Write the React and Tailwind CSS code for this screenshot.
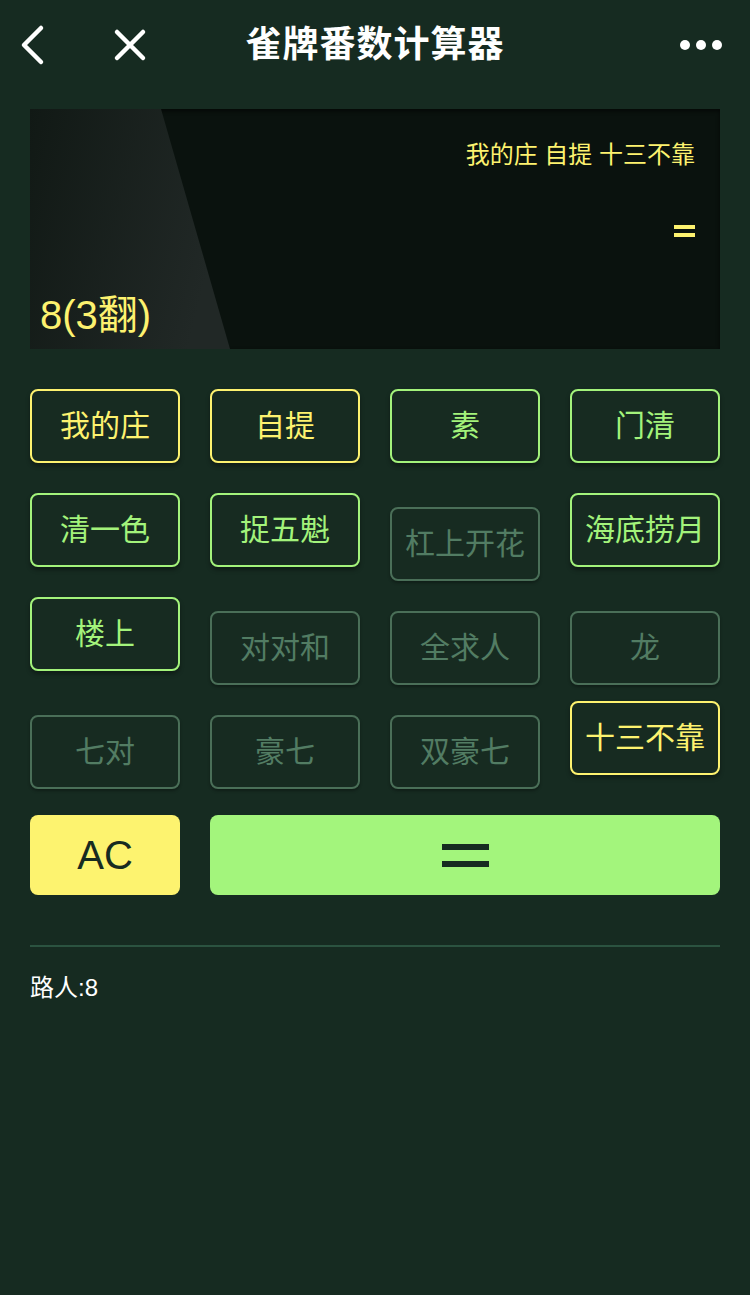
const FONT = { fontFamily: '"Liberation Sans", "Noto Sans CJK SC", sans-serif' }

// kind: yellow = picked (raised), green = available (raised), off = disabled
const TILES = [
  { label: '我的庄', kind: 'yellow' },
  { label: '自提', kind: 'yellow' },
  { label: '素', kind: 'green' },
  { label: '门清', kind: 'green' },
  { label: '清一色', kind: 'green' },
  { label: '捉五魁', kind: 'green' },
  { label: '杠上开花', kind: 'off' },
  { label: '海底捞月', kind: 'green' },
  { label: '楼上', kind: 'green' },
  { label: '对对和', kind: 'off' },
  { label: '全求人', kind: 'off' },
  { label: '龙', kind: 'off' },
  { label: '七对', kind: 'off' },
  { label: '豪七', kind: 'off' },
  { label: '双豪七', kind: 'off' },
  { label: '十三不靠', kind: 'yellow' },
]

const KIND = {
  yellow: 'border-[#fdf26f] text-[#fdf26f] shadow-[0_3px_4px_rgba(0,0,0,0.35)]',
  green: 'border-[#a3f37b] text-[#a3f37b] shadow-[0_3px_4px_rgba(0,0,0,0.35)]',
  off: 'border-[#4a6f58] text-[#527c63] mt-[14px] shadow-[0_2px_3px_rgba(0,0,0,0.3)]',
}

function Tile({ label, kind }) {
  return (
    <button
      className={`h-[74px] w-full rounded-lg border-2 bg-[#172b21] flex items-center justify-center text-[30px] leading-none ${KIND[kind]}`}
    >
      {label}
    </button>
  )
}

export default function App() {
  return (
    <div className="min-h-[1295px] w-[750px] bg-[#162b21] text-white" style={FONT}>
      {/* nav bar */}
      <div className="h-[90px] flex items-center">
        <div className="w-[160px] flex items-center">
          <svg width="60" height="90" viewBox="0 0 60 90" className="shrink-0">
            <polyline points="41,28 24,45 41,62" fill="none" stroke="white" strokeWidth="4.5" strokeLinecap="round" strokeLinejoin="round" />
          </svg>
          <svg width="90" height="90" viewBox="0 0 90 90" className="shrink-0">
            <path d="M57 32 L83 58 M83 32 L57 58" stroke="white" strokeWidth="4.5" strokeLinecap="round" />
          </svg>
        </div>
        <div className="flex-1 text-center text-[36px] font-semibold tracking-[1px]">雀牌番数计算器</div>
        <div className="w-[160px] flex justify-end gap-[6px] pr-[28px]">
          <span className="w-[10px] h-[10px] rounded-full bg-white" />
          <span className="w-[10px] h-[10px] rounded-full bg-white" />
          <span className="w-[10px] h-[10px] rounded-full bg-white" />
        </div>
      </div>

      <div className="px-[30px]">
        {/* display */}
        <div className="mt-[19px] h-[240px] bg-[#0a120e] relative overflow-hidden shadow-[inset_0_2px_4px_rgba(0,0,0,0.6)]">
          <svg className="absolute left-0 top-0" width="210" height="240" viewBox="0 0 210 240">
            <defs>
              <linearGradient id="wedge" x1="0" y1="0" x2="1" y2="0.3">
                <stop offset="0" stopColor="#111915" />
                <stop offset="1" stopColor="#212826" />
              </linearGradient>
            </defs>
            <polygon points="0,0 131,0 200,240 0,240" fill="url(#wedge)" />
          </svg>
          <div className="relative h-full flex flex-col items-end pr-[25px] pt-[34px]">
            <div className="text-[24px] leading-none text-[#fdf26f]">我的庄 自提 十三不靠</div>
            <div className="mt-[58px] flex flex-col gap-[4px] w-[21px]">
              <span className="h-[4px] bg-[#fdf26f]" />
              <span className="h-[4px] bg-[#fdf26f]" />
            </div>
            <div className="mt-auto self-start pl-[10px] pb-[14px] text-[40px] leading-none text-[#fdf26f]">8(3翻)</div>
          </div>
        </div>

        {/* tiles */}
        <div className="mt-[40px] grid grid-cols-4 gap-x-[30px] gap-y-[16px] items-start">
          {TILES.map(t => (
            <div key={t.label} className="h-[88px]">
              <Tile {...t} />
            </div>
          ))}
        </div>

        {/* actions */}
        <div className="mt-[26px] flex gap-[30px]">
          <button className="w-[150px] h-[80px] rounded-lg bg-[#fdf36f] text-[#172b21] text-[40px] flex items-center justify-center">AC</button>
          <button className="flex-1 h-[80px] rounded-lg bg-[#a3f57c] flex flex-col items-center justify-center gap-[11px]">
            <span className="block w-[47px] h-[6px] bg-[#172b21]" />
            <span className="block w-[47px] h-[6px] bg-[#172b21]" />
          </button>
        </div>

        <div className="mt-[50px] h-[2px] bg-[#2b5340]" />
        <div className="mt-[29px] text-[24px] leading-none text-white">路人:8</div>
      </div>
    </div>
  )
}
